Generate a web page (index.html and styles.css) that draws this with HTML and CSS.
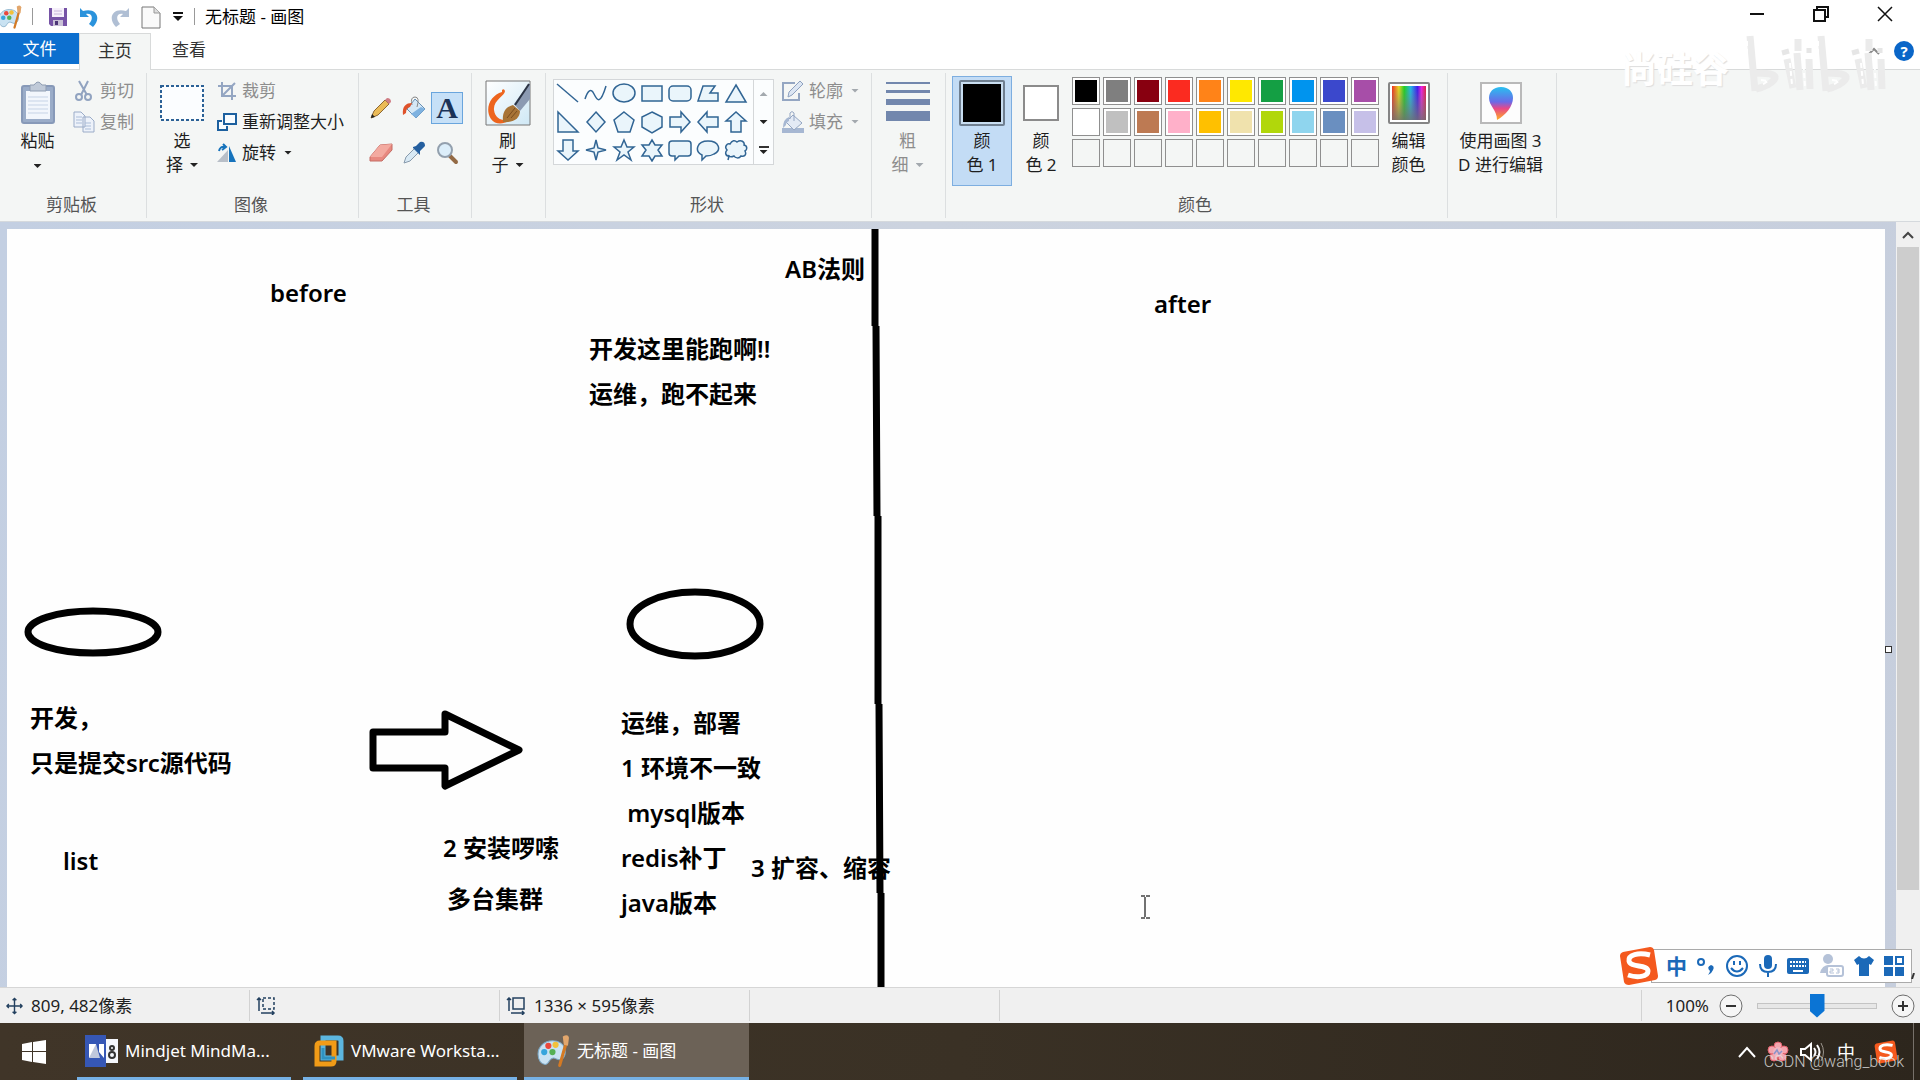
FILE: index.html
```html
<!DOCTYPE html>
<html lang="zh-CN">
<head>
<meta charset="utf-8">
<title>无标题 - 画图</title>
<link rel="stylesheet" href="styles.css">
</head>
<body>
<svg class="defs" aria-hidden="true">
  <defs>
    <linearGradient id="sky" x1="0" y1="0" x2="1" y2="1"><stop offset="0" stop-color="#fff"/><stop offset="1" stop-color="#cfe8f5"/></linearGradient>
    <linearGradient id="rainbow"><stop offset="0" stop-color="#f03020"/><stop offset=".2" stop-color="#e8d820"/><stop offset=".36" stop-color="#20d020"/><stop offset=".55" stop-color="#20b8e8"/><stop offset=".75" stop-color="#4018f0"/><stop offset=".87" stop-color="#f020e0"/><stop offset="1" stop-color="#e02040"/></linearGradient>
    <linearGradient id="fade" x1="0" y1="0" x2="0" y2="1"><stop offset="0" stop-color="#808080" stop-opacity="0"/><stop offset="1" stop-color="#707070" stop-opacity=".85"/></linearGradient>
    <linearGradient id="drop" x1="0" y1="0" x2="0" y2="1"><stop offset="0" stop-color="#28c0f0"/><stop offset=".45" stop-color="#6a6ae8"/><stop offset=".65" stop-color="#e84888"/><stop offset="1" stop-color="#ffb020"/></linearGradient>
    <symbol id="palette" viewBox="0 0 32 32">
      <path d="M15 6C7 6 1 12 1 19c0 6 3 10 7 10 4 0 3-5 7-6 3-1 5 3 9 1 3-2 4-6 3-10-1-5-6-8-12-8z" fill="#c9e2f2" stroke="#7da9c6"/>
      <circle cx="7" cy="17" r="3" fill="#37a5dc"/><circle cx="11" cy="11" r="3" fill="#e9483c"/><circle cx="18" cy="10" r="3" fill="#f2c13a"/><circle cx="15" cy="17" r="3" fill="#55b054"/>
      <path d="M28 9 22 30" stroke="#d47a24" stroke-width="3" stroke-linecap="round"/><path d="M25 2q5-3 6 1l-1 8-4-1z" fill="#e2a66c"/>
    </symbol>
    <symbol id="sogou" viewBox="0 0 40 40">
      <path d="M4 6 31 1q3 0 4 3l4 26q0 3-3 4L10 39q-4 0-5-3L1 10q0-3 3-4z" fill="#f4591e"/>
      <path d="M31 9C19 6 9 9 10 15c1 7 19 3 19 10 0 6-11 7-20 4" fill="none" stroke="#fff" stroke-width="5"/>
    </symbol>
  </defs>
</svg>

<div class="app">
  <header class="titlebar">
    <svg class="app-icon" width="24" height="24"><use href="#palette"/></svg>
    <span class="bar-divider"></span>
    <div class="quick">
      <button aria-label="保存"><svg width="20" height="20" viewBox="0 0 20 20"><path d="M1 1h18v18H3l-2-2z" fill="#7653a6"/><path d="M4 1h12v9H4z" fill="#f5effa"/><path d="M6 4h8M6 7h8" stroke="#c6b4da"/><path d="M5 13h10v6H5z" fill="#c9c1d6"/><path d="M7 14h3v4H7z" fill="#4c3576"/></svg></button>
      <button aria-label="撤消"><svg width="20" height="20" viewBox="0 0 20 20"><path d="M1 1v9h9L7 7c6-1 8 4 3 10l4 3C23 11 17 0 4 4z" fill="#2b93dc"/></svg></button>
      <button aria-label="重做"><svg width="20" height="20" viewBox="0 0 20 20"><path d="M19 1v9h-9l3-3C7 6 5 11 10 17l-4 3C-3 11 3 0 16 4z" fill="#b0bfd4"/></svg></button>
      <button aria-label="新建"><svg width="20" height="24" viewBox="0 0 20 24"><path d="M1 2h12l6 6v15H1z" fill="#fafafa" stroke="#777"/><path d="M13 2v6h6" fill="#ddd" stroke="#999"/></svg></button>
      <button aria-label="自定义快速访问工具栏"><svg width="12" height="10" viewBox="0 0 12 10"><path d="M1 1h10" stroke="#111" stroke-width="2"/><path d="M1 4h10L6 9z" fill="#111"/></svg></button>
    </div>
    <span class="bar-divider"></span>
    <h1 class="title">无标题 - 画图</h1>
    <div class="window-buttons">
      <button aria-label="最小化"><svg width="16" height="16" viewBox="0 0 16 16"><path d="M1 8h14" stroke="#111" stroke-width="2"/></svg></button>
      <button aria-label="还原"><svg width="16" height="16" viewBox="0 0 16 16"><path d="M4 4V1h11v10h-3M1 4h11v11H1z" fill="none" stroke="#111" stroke-width="2"/></svg></button>
      <button aria-label="关闭"><svg width="16" height="16" viewBox="0 0 16 16"><path d="m1 1 14 14M15 1 1 15" stroke="#111" stroke-width="1.5"/></svg></button>
    </div>
  </header>

  <nav class="tabs">
    <button class="tab tab-file">文件</button>
    <button class="tab tab-active">主页</button>
    <button class="tab">查看</button>
    <div class="tab-tools">
      <button aria-label="折叠功能区"><svg width="12" height="8" viewBox="0 0 12 8"><path d="m1 7 5-5 5 5" fill="none" stroke="#888" stroke-width="2"/></svg></button>
      <button class="help" aria-label="帮助">?</button>
    </div>
  </nav>

  <section class="ribbon">
    <div class="group g-clipboard">
      <div class="group-body">
        <button class="big paste">
          <span class="pic"><svg width="36" height="44" viewBox="0 0 36 44"><rect x="2" y="5" width="32" height="37" rx="2" fill="#9aacc8" stroke="#8799b8" stroke-width="2"/><path d="M6 10h24v28H6z" fill="#f2f6fc"/><path d="M8 16h20M8 20h20M8 24h20M8 28h20M8 32h20" stroke="#c6d3e6"/><path d="M10 4h4q4-6 8 0h4v6H10z" fill="#c0cad8" stroke="#8f9db2"/></svg></span>
          <span>粘贴</span><span class="caret"></span>
        </button>
        <div class="rows">
          <button class="row off"><svg width="22" height="22" viewBox="0 0 22 22"><path d="m6 1 8 14M15 1 8 15" stroke="#91a3c0" stroke-width="2"/><circle cx="6" cy="17" r="3" fill="none" stroke="#91a3c0" stroke-width="2"/><circle cx="15" cy="17" r="3" fill="none" stroke="#91a3c0" stroke-width="2"/></svg>剪切</button>
          <button class="row off"><svg width="22" height="22" viewBox="0 0 22 22"><path d="M1 1h7l4 4v11H1zM10 6h7l4 4v11H10z" fill="#edf2fa" stroke="#9bacc8"/><path d="M3 6h6M3 9h6M3 12h6M12 12h6M12 15h6M12 18h6" stroke="#abbdd8"/></svg>复制</button>
        </div>
      </div>
      <div class="group-label">剪贴板</div>
    </div>

    <div class="group g-image">
      <div class="group-body">
        <button class="big select">
          <span class="pic"><svg width="44" height="36" viewBox="0 0 44 36"><rect x="1" y="1" width="42" height="34" fill="#fbfdff" stroke="#2b6196" stroke-width="2" stroke-dasharray="3 2"/></svg></span>
          <span>选</span><span>择<i class="caret"></i></span>
        </button>
        <div class="rows">
          <button class="row off"><svg width="20" height="20" viewBox="0 0 20 20"><path d="M5 1v14h14M1 5h14v14M6 14 18 2" fill="none" stroke="#94a6c2" stroke-width="2"/></svg>裁剪</button>
          <button class="row"><svg width="20" height="20" viewBox="0 0 20 20"><path d="M7 2h12v10H7zM5 9H1v9h9v-4" fill="#f8fcff" stroke="#1c609f" stroke-width="2"/></svg>重新调整大小</button>
          <button class="row"><svg width="20" height="20" viewBox="0 0 20 20"><path d="M11 7v12H0z" fill="#b8bfc8"/><path d="M12 3v16h7z" fill="#1673bc"/><path d="M2 8q1-5 6-4M6 1l3 3-4 3" fill="none" stroke="#1673bc" stroke-width="2"/></svg>旋转<i class="caret"></i></button>
        </div>
      </div>
      <div class="group-label">图像</div>
    </div>

    <div class="group g-tools">
      <div class="group-body tools">
        <button aria-label="铅笔"><svg width="24" height="24" viewBox="0 0 24 24"><path d="m2 22 3-7L16 4l4 4L9 19z" fill="#ebbb57" stroke="#8c6734"/><path d="m16 4 2-2q4 0 4 4l-2 2z" fill="#cf7d84"/><path d="m2 22 1-4 3 3z" fill="#222"/></svg></button>
        <button aria-label="用颜色填充"><svg width="24" height="24" viewBox="0 0 24 24"><path d="m13 3 10 10-9 9-9-9z" fill="#d5e8f6" stroke="#658fb4"/><path d="m19 11 4 2-9 9-5-4z" fill="#7eb2e0"/><path d="M10 9Q8 1 13 1t2 10" fill="none" stroke="#888"/><path d="M10 7C4 7 0 10 1 19l3-2q0-5 4-6z" fill="#df522a"/></svg></button>
        <button class="pressed" aria-label="文本"><span class="letter">A</span></button>
        <button aria-label="橡皮擦"><svg width="24" height="24" viewBox="0 0 24 24"><path d="M1 16 11 4l12-1v6L13 20H1z" fill="#e88980" stroke="#c46d65"/><path d="m1 16 10-12 12-1-10 13z" fill="#f3aaa0"/></svg></button>
        <button aria-label="颜色选取器"><svg width="24" height="24" viewBox="0 0 24 24"><path d="m2 22 2-6 9-9 4 4-9 9z" fill="#d8e9f4" stroke="#879aac"/><path d="m11 6 3-1 4-4q5-1 5 4l-5 5v4l-7-7z" fill="#245f9f"/></svg></button>
        <button aria-label="放大镜"><svg width="24" height="24" viewBox="0 0 24 24"><path d="m15 15 6 6" stroke="#936a45" stroke-width="4" stroke-linecap="round"/><circle cx="10" cy="9" r="7" fill="#dceefa" stroke="#93a0ae" stroke-width="2"/></svg></button>
      </div>
      <div class="group-label">工具</div>
    </div>

    <div class="group g-brush">
      <div class="group-body">
        <button class="big">
          <span class="pic"><svg width="46" height="46" viewBox="0 0 46 46"><path d="M1 1h44v44H1z" fill="url(#sky)" stroke="#777"/><path d="M17 10q2-2 3 1c0 5-12 9-11 19 1 7 5 10 14 11-4 3-13 4-17-2C-1 28 6 15 17 12z" fill="#ed651e"/><path d="M29 24 43 5l2-1v15L35 31z" fill="#8b9ab2"/><path d="m44 4-14 21" stroke="#2b3444" stroke-width="2"/><path d="M18 42c-1-9 2-15 10-17l7 6c0 7-6 12-17 11z" fill="#a87436"/><path d="m22 38 8-10M26 38l6-7" stroke="#7a4d1e"/></svg></span>
          <span>刷</span><span>子<i class="caret"></i></span>
        </button>
      </div>
      <div class="group-label"></div>
    </div>

    <div class="group g-shapes">
      <div class="group-body">
        <div class="gallery">
          <div class="shapes">
            <button aria-label="直线"><svg viewBox="0 0 24 24"><path d="m1 2 21 18"/></svg></button>
            <button aria-label="曲线"><svg viewBox="0 0 24 24"><path d="M1 17C4 8 7 6 10 12s6 12 12-8"/></svg></button>
            <button aria-label="椭圆形"><svg viewBox="0 0 24 24"><ellipse cx="12" cy="11" rx="11" ry="9"/></svg></button>
            <button aria-label="矩形"><svg viewBox="0 0 24 24"><path d="M2 4h20v15H2z"/></svg></button>
            <button aria-label="圆角矩形"><svg viewBox="0 0 24 24"><rect x="1" y="4" width="22" height="15" rx="4"/></svg></button>
            <button aria-label="多边形"><svg viewBox="0 0 24 24"><path d="M2 19 7 4h12l-5 7h8v8z"/></svg></button>
            <button aria-label="三角形"><svg viewBox="0 0 24 24"><path d="m12 3 10 17H2z"/></svg></button>
            <button aria-label="直角三角形"><svg viewBox="0 0 24 24"><path d="M2 2v20h20z"/></svg></button>
            <button aria-label="菱形"><svg viewBox="0 0 24 24"><path d="m12 2 9 10-9 10-9-10z"/></svg></button>
            <button aria-label="五边形"><svg viewBox="0 0 24 24"><path d="m12 2 10 8-4 12H6L2 10z"/></svg></button>
            <button aria-label="六边形"><svg viewBox="0 0 24 24"><path d="m12 2 10 5v10l-10 6-10-6V7z"/></svg></button>
            <button aria-label="右箭头"><svg viewBox="0 0 24 24"><path d="M2 7h11V2l9 10-9 10v-5H2z"/></svg></button>
            <button aria-label="左箭头"><svg viewBox="0 0 24 24"><path d="M22 7H11V2L2 12l9 10v-5h11z"/></svg></button>
            <button aria-label="上箭头"><svg viewBox="0 0 24 24"><path d="M7 22V11H2l10-9 10 9h-5v11z"/></svg></button>
            <button aria-label="下箭头"><svg viewBox="0 0 24 24"><path d="M7 2v11H2l10 9 10-9h-5V2z"/></svg></button>
            <button aria-label="四角星形"><svg viewBox="0 0 24 24"><path d="m12 2 2 8 8 2-8 2-2 8-2-8-8-2 8-2z"/></svg></button>
            <button aria-label="五角星形"><svg viewBox="0 0 24 24"><path d="m12 2 3 7h7l-6 5 3 8-7-5-7 5 3-8-6-5h7z"/></svg></button>
            <button aria-label="六角星形"><svg viewBox="0 0 24 24"><path d="m12 2 3 5h7l-4 5 4 6h-7l-3 5-3-5H2l4-6-4-5h7z"/></svg></button>
            <button aria-label="圆角矩形标注"><svg viewBox="0 0 24 24"><path d="M4 3h16q3 0 3 3v9q0 3-3 3h-9l-4 4v-4H4q-3 0-3-3V6q0-3 3-3z"/></svg></button>
            <button aria-label="椭圆形标注"><svg viewBox="0 0 24 24"><path d="M6 22v-5C-2 13 1 3 12 3s14 9 6 13c-3 2-6 2-8 2z"/></svg></button>
            <button aria-label="云形标注"><svg viewBox="0 0 24 24"><path d="M5 18c-4 0-4-4-2-6-3-3 0-7 3-6 2-4 5-4 7-2 4-3 8 0 7 3 4 1 3 5 1 6 2 4-1 6-4 5-2 3-6 2-7 0-2 1-4 1-5 0l-1 4z"/></svg></button>
          </div>
          <div class="gallery-scroll">
            <button aria-label="上一行"><i class="caret up faint"></i></button>
            <button aria-label="下一行"><i class="caret"></i></button>
            <button class="more" aria-label="更多形状"><i class="caret"></i></button>
          </div>
        </div>
        <div class="rows">
          <button class="row off"><svg width="22" height="22" viewBox="0 0 22 22"><path d="M13 3H1v17h16v-7" fill="none" stroke="#94a6c2" stroke-width="2"/><path d="m6 17 1-5L18 1l3 3L10 15z" fill="#dce6f3" stroke="#8ea1bf"/></svg>轮廓<i class="caret faint"></i></button>
          <button class="row off"><svg width="22" height="22" viewBox="0 0 22 22"><path d="M0 17h22v5H0z" fill="#a6b7d2"/><path d="m11 4 9 8-8 7-8-8z" fill="#e3eaf5" stroke="#94a6c2"/><path d="M8 8V2q2-3 4 0v8" fill="none" stroke="#94a6c2"/><path d="M7 6q-6 2-6 11l3-3q0-3 3-4z" fill="#a6b7d2"/></svg>填充<i class="caret faint"></i></button>
        </div>
      </div>
      <div class="group-label">形状</div>
    </div>

    <div class="group g-size">
      <div class="group-body">
        <button class="big off">
          <span class="pic"><svg width="44" height="44" viewBox="0 0 44 44"><path d="M0 1h44v2H0zM0 9h44v3H0zM0 18h44v6H0zM0 30h44v10H0z" fill="#7287ad"/></svg></span>
          <span>粗</span><span>细<i class="caret faint"></i></span>
        </button>
      </div>
      <div class="group-label"></div>
    </div>

    <div class="group g-colors">
      <div class="group-body">
        <button class="big color-slot chosen"><span class="pic"><i class="swatch-large"></i></span><span>颜</span><span>色 1</span></button>
        <button class="big color-slot"><span class="pic"><i class="swatch-small"></i></span><span>颜</span><span>色 2</span></button>
        <div class="palette">
          <button aria-label="黑色" style="background-color:#000"></button><button aria-label="灰色-50%" style="background-color:#7f7f7f"></button><button aria-label="深红色" style="background-color:#880010"></button><button aria-label="红色" style="background-color:#fb2b20"></button><button aria-label="橙色" style="background-color:#ff8318"></button><button aria-label="黄色" style="background-color:#ffe800"></button><button aria-label="绿色" style="background-color:#149f44"></button><button aria-label="青绿色" style="background-color:#0094ee"></button><button aria-label="靛蓝色" style="background-color:#3b48cc"></button><button aria-label="紫色" style="background-color:#a74ea8"></button>
          <button aria-label="白色" style="background-color:#fff"></button><button aria-label="灰色-25%" style="background-color:#c0c0c0"></button><button aria-label="褐色" style="background-color:#bd7a53"></button><button aria-label="玫瑰色" style="background-color:#ffb0c9"></button><button aria-label="金色" style="background-color:#ffc000"></button><button aria-label="浅黄色" style="background-color:#f0e2ad"></button><button aria-label="酸橙色" style="background-color:#b1d70b"></button><button aria-label="淡青绿色" style="background-color:#8fd5ee"></button><button aria-label="蓝灰色" style="background-color:#6a8fc0"></button><button aria-label="淡紫色" style="background-color:#c6c0e8"></button>
          <button class="empty" aria-label="自定义 1"></button><button class="empty" aria-label="自定义 2"></button><button class="empty" aria-label="自定义 3"></button><button class="empty" aria-label="自定义 4"></button><button class="empty" aria-label="自定义 5"></button><button class="empty" aria-label="自定义 6"></button><button class="empty" aria-label="自定义 7"></button><button class="empty" aria-label="自定义 8"></button><button class="empty" aria-label="自定义 9"></button><button class="empty" aria-label="自定义 10"></button>
        </div>
        <button class="big edit-colors">
          <span class="pic"><svg width="42" height="42" viewBox="0 0 42 42"><rect x="1" y="1" width="40" height="40" rx="1" fill="#fff" stroke="#858585" stroke-width="2"/><path d="M4 4h34v34H4z" fill="url(#rainbow)"/><path d="M4 4h34v34H4z" fill="url(#fade)"/></svg></span>
          <span>编辑</span><span>颜色</span>
        </button>
      </div>
      <div class="group-label">颜色</div>
    </div>

    <div class="group g-3d">
      <div class="group-body">
        <button class="big">
          <span class="pic"><svg width="42" height="42" viewBox="0 0 42 42"><path d="M1 1h40v40H1z" fill="#fdfdfd" stroke="#b9b9b9" stroke-width="2"/><path d="M21 5c-8 0-12 5-12 11 0 8 8 12 8 22 9-5 16-14 16-22 0-6-4-11-12-11z" fill="url(#drop)"/></svg></span>
          <span>使用画图 3</span><span>D 进行编辑</span>
        </button>
      </div>
      <div class="group-label"></div>
    </div>
  </section>

  <main class="workspace">
    <div class="canvas">
      <svg class="ink" aria-hidden="true">
        <path d="M868 0v97M869 97l1 190M871 287v188M872 475l1 189M874 664v900"/>
        <ellipse cx="86" cy="403" rx="65" ry="21"/>
        <ellipse cx="688" cy="395" rx="65" ry="32"/>
        <path d="M366 503h72v-18l74 36-74 36v-18h-72z"/>
      </svg>
      <p class="note n-before">before</p>
      <p class="note n-rule">AB法则</p>
      <p class="note n-after">after</p>
      <p class="note n-works">开发这里能跑啊!!<br>运维，跑不起来</p>
      <p class="note n-dev">开发，<br>只是提交src源代码</p>
      <p class="note n-list">list</p>
      <p class="note n-install">2 安装啰嗦</p>
      <p class="note n-cluster">多台集群</p>
      <p class="note n-ops">运维，部署<br>1 环境不一致<br> mysql版本<br>redis补丁<br>java版本</p>
      <p class="note n-scale">3 扩容、缩容</p>
      <svg class="text-cursor" width="11" height="24" viewBox="0 0 11 24" aria-hidden="true"><path d="M1 1h4M6 1h4M1 23h4M6 23h4M5 2v20" fill="none" stroke="#444" stroke-width="1.5"/></svg>
    </div>
    <span class="resize-handle"></span>
    <div class="scrollbar">
      <button aria-label="向上滚动"><svg width="12" height="8" viewBox="0 0 12 8"><path d="m1 7 5-5 5 5" fill="none" stroke="#444" stroke-width="2"/></svg></button>
      <div class="scroll-thumb"></div>
    </div>
    <div class="ime">
      <svg class="ime-logo" width="40" height="40"><use href="#sogou"/></svg>
      <div class="ime-bar">
        <button class="ime-text">中</button>
        <button aria-label="中文标点"><svg width="18" height="24" viewBox="0 0 18 24"><circle cx="4" cy="8" r="3" fill="none" stroke="#1b69b8" stroke-width="2"/><path d="M14 11q4 1 2 5-1 3-5 5 2-3 2-4-4-4 1-6z" fill="#1b69b8"/></svg></button>
        <button aria-label="表情"><svg width="24" height="24" viewBox="0 0 24 24"><circle cx="12" cy="12" r="10" fill="none" stroke="#1b69b8" stroke-width="2"/><path d="M9 7v4M15 7v4M6 14q6 7 12 0" fill="none" stroke="#1b69b8" stroke-width="2"/></svg></button>
        <button aria-label="语音"><svg width="18" height="24" viewBox="0 0 18 24"><rect x="5" y="1" width="8" height="14" rx="4" fill="#1b69b8"/><path d="M1 10q0 8 8 8t8-8M9 18v5" fill="none" stroke="#1b69b8" stroke-width="2"/></svg></button>
        <button aria-label="软键盘"><svg width="24" height="18" viewBox="0 0 24 18"><rect x="1" y="1" width="22" height="16" rx="2" fill="#1b69b8"/><path d="M4 5h16M4 9h16" stroke="#fff" stroke-width="2" stroke-dasharray="2 1"/><path d="M7 14h10" stroke="#fff" stroke-width="2"/></svg></button>
        <button aria-label="用户"><svg width="24" height="24" viewBox="0 0 24 24"><circle cx="8" cy="5" r="5" fill="#b5c2d8"/><path d="M0 19q2-9 11-8v8z" fill="#b5c2d8"/><rect x="7" y="12" width="16" height="10" rx="2" fill="#fff" stroke="#b5c2d8" stroke-width="2"/><path d="M10 15h3v2h-3v2h4M16 15h3v4h-3M17 17h2" fill="none" stroke="#b5c2d8"/></svg></button>
        <button aria-label="皮肤"><svg width="20" height="20" viewBox="0 0 20 20"><path d="M5 0q5 5 10 0l5 4-3 5-2-1v12H5V8L3 9 0 4z" fill="#1b69b8"/></svg></button>
        <button aria-label="工具箱"><svg width="20" height="20" viewBox="0 0 20 20"><path d="M0 0h9v9H0zM0 11h9v9H0zM11 11h9v9h-9z" fill="#1b69b8"/><path d="M12 1h7v7h-7z" fill="none" stroke="#1b69b8" stroke-width="2"/></svg></button>
      </div>
      <svg class="ime-grip" width="4" height="6" viewBox="0 0 4 6" aria-hidden="true"><path d="M3 0 1 6" stroke="#333" stroke-width="2"/></svg>
    </div>
  </main>

  <footer class="status">
    <div class="cell"><svg width="17" height="18" viewBox="0 0 18 18"><path d="M9 1v16M1 9h16M7 3l2-2 2 2M7 15l2 2 2-2M3 7 1 9l2 2M15 7l2 2-2 2" fill="none" stroke="#23405f" stroke-width="1.5"/></svg>809, 482像素</div>
    <div class="cell"><svg width="20" height="18" viewBox="0 0 20 18"><path d="M3 1v13M1 3l2-2 2 2M5 16h13M16 14l2 2-2 2" fill="none" stroke="#23405f" stroke-width="1.5"/><path d="M7 1h11v11H7z" fill="none" stroke="#23405f" stroke-width="1.5" stroke-dasharray="3 2"/></svg></div>
    <div class="cell"><svg width="20" height="18" viewBox="0 0 20 18"><path d="M3 1v13M1 3l2-2 2 2M5 16h13M16 14l2 2-2 2" fill="none" stroke="#23405f" stroke-width="1.5"/><path d="M7 1h11v11H7z" fill="none" stroke="#23405f" stroke-width="1.5"/></svg>1336 × 595像素</div>
    <div class="cell"></div>
    <div class="zoom">
      <label for="zoom">100%</label>
      <button aria-label="缩小"><svg width="24" height="24" viewBox="0 0 24 24"><circle cx="12" cy="12" r="11" fill="#f6f6f6" stroke="#6d6d6d"/><path d="M7 12h10" stroke="#333" stroke-width="2"/></svg></button>
      <input id="zoom" type="range" min="0" max="100" value="50">
      <button aria-label="放大"><svg width="24" height="24" viewBox="0 0 24 24"><circle cx="12" cy="12" r="11" fill="#f6f6f6" stroke="#6d6d6d"/><path d="M7 12h10M12 7v10" stroke="#333" stroke-width="2"/></svg></button>
    </div>
  </footer>

  <div class="taskbar">
    <button class="start" aria-label="开始"><svg width="24" height="24" viewBox="0 0 24 24"><path d="m0 4 10-2v9H0zM11 2l13-2v11H11zM0 12h10v10L0 20zM11 12h13v12l-13-2z" fill="#fff"/></svg></button>
    <button class="task"><svg width="33" height="32" viewBox="0 0 33 32"><path d="M0 0h21v32H0z" fill="#3657b5"/><path d="M21 4h12v24H21z" fill="#f5f7fc"/><path d="M4 9v14l7-8V9zM19 9v14l-5-6V9z" fill="#fff"/><path d="m4 23 7-14 4 14z" fill="#c0c8dc"/><circle cx="27" cy="13" r="2" fill="none" stroke="#333" stroke-width="2"/><circle cx="27" cy="20" r="3" fill="none" stroke="#333" stroke-width="2"/></svg><span>Mindjet MindMa...</span></button>
    <button class="task"><svg width="30" height="32" viewBox="0 0 30 32"><path d="M9 3h15q3 0 3 3v17H9z" fill="none" stroke="#5cb6df" stroke-width="5"/><path d="M3 11q0-3 3-3h14v18q0 3-3 3H3z" fill="none" stroke="#f19b17" stroke-width="5"/><path d="M9 13v10h12" fill="none" stroke="#2f92c0" stroke-width="3"/></svg><span>VMware Worksta...</span></button>
    <button class="task current"><svg width="33" height="34"><use href="#palette"/></svg><span>无标题 - 画图</span></button>
    <div class="tray">
      <button aria-label="显示隐藏的图标"><svg width="18" height="12" viewBox="0 0 18 12"><path d="m1 11 8-9 8 9" fill="none" stroke="#fff" stroke-width="2"/></svg></button>
      <button aria-label="通知"><svg width="22" height="22" viewBox="0 0 22 22"><g fill="#f2a5ae" stroke="#e3616d"><circle cx="11" cy="5" r="4"/><circle cx="17" cy="9" r="4"/><circle cx="15" cy="16" r="4"/><circle cx="7" cy="16" r="4"/><circle cx="5" cy="9" r="4"/></g><circle cx="11" cy="11" r="5" fill="#f0b4c0"/><path d="m7 13 3-4 2 4 3-3" fill="none" stroke="#8b93c9" stroke-width="1.5"/></svg></button>
      <button aria-label="音量"><svg width="24" height="20" viewBox="0 0 24 20"><path d="M1 7h4l6-5v16l-6-5H1z" fill="none" stroke="#fff" stroke-width="2"/><path d="M14 6q3 4 0 8M17 3q5 7 0 14" fill="none" stroke="#fff" stroke-width="2"/><path d="M21 1q5 9 0 18" fill="none" stroke="#9b958d"/></svg></button>
      <button class="tray-text">中</button>
      <button aria-label="搜狗输入法"><svg width="24" height="24"><use href="#sogou"/></svg></button>
      <span class="show-desktop"></span>
    </div>
    <span class="credit">CSDN @wang_book</span>
  </div>

  <div class="stamp">
    <span>尚硅谷</span>
    <svg width="142" height="64" viewBox="0 0 142 64" role="img" aria-label="bilibili"><g fill="none" stroke="#ebebeb" stroke-width="7"><path d="M6 3l5 55M12 40q24 0 18 7-5 6-18 9"/><path d="m43 26 6 29M54 6v12M53 20l3 37M65 26l1 30"/><path d="M77 3l5 55M83 40q24 0 18 7-5 6-18 9"/><path d="m114 26 6 29M125 6v12M124 20l3 37M137 26l1 30"/></g><path d="M38 20l7-2M65 20v-5M108 20l7-2M136 20v-5" stroke="#e6e6e6" stroke-width="5"/><path d="m17 47 7 1-6 4M88 47l7 1-6 4M3 8v16M46 30l2 22M59 24l2 30M74 8v16M117 30l2 22M130 24l2 30" fill="none" stroke="#fff" stroke-width="2" stroke-dasharray="5 3"/></svg>
  </div>
</div>
</body>
</html>
```
FILE: styles.css
```css
* { box-sizing: border-box; }

body {
  margin: 0;
  font-family: "Noto Sans", "Noto Sans CJK SC", sans-serif;
  font-size: 17px;
  line-height: 24px;
  color: #1e1e1e;
}

button {
  margin: 0;
  padding: 0;
  border: 0;
  background: none;
  font: inherit;
  color: inherit;
}

svg { display: block; flex: none; }

.defs { position: absolute; width: 0; height: 0; }

.app {
  position: relative;
  display: flex;
  flex-direction: column;
  height: 100vh;
  overflow: hidden;
  background: #fff;
}

/* Title bar */
.titlebar {
  display: flex;
  flex: none;
  align-items: center;
  height: 33px;
  gap: 10px;
}
.app-icon { margin-left: -2px; }
.bar-divider { width: 1px; height: 17px; background: #999; }
.quick { display: flex; align-items: center; gap: 11px; margin-left: 5px; }
.quick button { display: flex; }
.title { margin: 0; font-size: 17px; font-weight: 400; color: #000; }
.window-buttons { display: flex; margin-left: auto; margin-top: -5px; }
.window-buttons button { display: flex; align-items: center; justify-content: center; width: 64px; height: 28px; }
.window-buttons button:last-child { margin-right: 3px; }

/* Tabs */
.tabs {
  display: flex;
  flex: none;
  height: 37px;
  border-bottom: 1px solid #d8dada;
}
.tab { width: 76px; height: 34px; color: #333; }
.tab-file { width: 79px; height: 31px; background: #0c6fcf; color: #fff; }
.tab-active {
  width: 72px;
  height: 37px;
  padding-bottom: 3px;
  border: 1px solid #d8dada;
  border-bottom: 0;
  background: #f4f6f5;
}
.tab-tools { display: flex; align-items: center; gap: 14px; margin-left: auto; padding-right: 6px; height: 35px; }
.help { width: 20px; height: 20px; border-radius: 50%; background: #0a66c8; color: #fff; font-size: 15px; font-weight: 700; line-height: 20px; }

/* Ribbon */
.ribbon {
  display: flex;
  flex: none;
  height: 152px;
  padding-top: 3px;
  border-bottom: 1px solid #d5d9dd;
  background: #f4f6f5;
}
.group {
  display: flex;
  flex: none;
  flex-direction: column;
  height: 145px;
  border-right: 1px solid #dcdfe0;
}
.group-body { display: flex; flex: 1; }
.group-label { height: 25px; padding-right: 3px; text-align: center; color: #555; }
.g-clipboard { width: 147px; }
.g-image { width: 212px; }
.g-tools { width: 113px; }
.g-brush { width: 74px; }
.g-shapes { width: 326px; }
.g-size { width: 74px; }
.g-colors { width: 502px; }
.g-3d { width: 109px; }

.big { display: flex; flex-direction: column; align-items: center; width: 71px; height: 112px; padding-top: 4px; }
.big > span:not(.pic) { display: flex; align-items: center; gap: 7px; min-height: 24px; white-space: nowrap; }
.pic { display: flex; align-items: center; height: 52px; }
.off { color: #8d8d8d; }

.caret {
  display: inline-block;
  width: 8px;
  height: 4px;
  background: #222;
  clip-path: polygon(0 0, 100% 0, 50% 100%);
}
.big > .caret:not(.pic) { min-height: 4px; margin-top: 11px; }
.caret.up { clip-path: polygon(50% 0, 100% 100%, 0 100%); }
.caret.faint { background: #a3a9ae; }

.rows { display: flex; flex-direction: column; padding-top: 2px; }
.row { display: flex; align-items: center; height: 31px; gap: 5px; white-space: nowrap; }
.row .caret { margin-left: 3px; }
.paste { margin-left: 2px; }
.g-image .big { width: 68px; }
.select { margin: 0 1px; }

.tools { display: grid; grid-template-columns: repeat(3, 33px); grid-auto-rows: 45px; padding: 12px 0 0 6px; }
.tools button { display: flex; align-items: center; justify-content: center; width: 32px; height: 32px; align-self: center; }
.tools .pressed { border: 1px solid #69a5dd; background: #c6e0f7; }
.letter { font-family: "Liberation Serif", serif; font-size: 30px; font-weight: 700; line-height: 30px; color: #1b3358; }

.gallery { display: flex; width: 221px; height: 86px; margin: 6px 8px 0 7px; border: 1px solid #d4d7d9; background: #fbfdfe; }
.shapes { display: grid; grid-template-columns: repeat(7, 28px); grid-auto-rows: 28px; width: 199px; padding-right: 2px; }
.shapes button { display: flex; align-items: center; justify-content: center; }
.shapes svg { width: 24px; height: 24px; fill: #eaf5fb; stroke: #316594; stroke-width: 1.5; }
.shapes button:nth-child(-n + 2) svg { fill: none; }
.gallery-scroll { display: grid; grid-auto-rows: 28px; flex: 1; border-left: 1px solid #d4d7d9; }
.gallery-scroll button { display: flex; flex-direction: column; gap: 2px; align-items: center; justify-content: center; }
.more::before { content: ""; width: 10px; height: 2px; background: #333; }

.color-slot { width: 60px; }
.g-colors .chosen { margin: 3px 0 0 6px; padding-top: 0; height: 110px; border: 1px solid #7daee0; background: #c3dcf5; }
.color-slot:nth-child(2) { width: 58px; }
.swatch-large { width: 46px; height: 46px; border: 2px solid #6f7f90; border-radius: 2px; background: #000; box-shadow: inset 0 0 0 2px #c8ddf0; }
.swatch-small { width: 36px; height: 36px; border: 2px solid #8b8b8b; background: #fff; }
.palette { display: grid; grid-template-columns: repeat(10, 28px); grid-auto-rows: 28px; gap: 3px; padding: 4px 0 0 2px; }
.palette button { border: 1px solid #8f8f8f; box-shadow: inset 0 0 0 2px #fff; }
.palette .empty { box-shadow: none; }
.g-3d .big { width: 105px; }
.edit-colors { margin-left: -6px; }

/* Drawing area */
.workspace {
  position: relative;
  display: flex;
  flex: 1;
  min-height: 0;
  padding: 7px 0 0 7px;
  background: linear-gradient(100deg, #c3cfe2, #ccd3df 45%, #c6cedd);
}
.canvas { position: relative; flex: 1; margin-right: 11px; overflow: hidden; background: #fefefe; }
.ink { position: absolute; inset: 0; width: 100%; height: 100%; fill: none; stroke: #000; stroke-width: 7; stroke-linejoin: round; }
.note { position: absolute; margin: 0; font-size: 24px; font-weight: 600; line-height: 45px; color: #000; white-space: pre; }
.n-before { left: 263px; top: 41px; }
.n-rule { left: 778px; top: 17px; }
.n-after { left: 1147px; top: 52px; }
.n-works { left: 582px; top: 97px; }
.n-dev { left: 23px; top: 466px; }
.n-list { left: 56px; top: 609px; }
.n-install { left: 436px; top: 596px; }
.n-cluster { left: 440px; top: 647px; }
.n-ops { left: 614px; top: 471px; }
.n-scale { left: 744px; top: 616px; }
.text-cursor { position: absolute; left: 1133px; top: 666px; }
.resize-handle { position: absolute; right: 28px; top: 424px; width: 7px; height: 7px; border: 1px solid #333; background: #fff; }

.scrollbar { display: flex; flex-direction: column; width: 24px; margin-top: -7px; padding: 0 1px; background: #f0f0f0; }
.scrollbar button { display: flex; flex: none; align-items: center; justify-content: center; height: 25px; }
.scroll-thumb { height: 84%; background: #cdcdcd; }

/* Input method bar floats over the drawing */
.ime { position: absolute; right: 8px; bottom: 1px; display: flex; align-items: center; width: 293px; height: 40px; }
.ime-logo { position: relative; z-index: 1; }
.ime-bar { display: flex; flex: 1; align-items: center; justify-content: space-between; height: 34px; margin-left: -8px; padding: 0 7px 0 14px; border: 1px solid #aaa; background: #fff; }
.ime-text { font-size: 21px; font-weight: 700; color: #1b69b8; }
.ime-grip { position: absolute; right: -3px; bottom: 7px; }

/* Status bar */
.status { display: flex; flex: none; height: 36px; padding: 2px 0; border-top: 1px solid #d6d6d6; background: #f0f0f0; }
.cell { display: flex; align-items: center; gap: 8px; width: 250px; padding-left: 6px; border-right: 1px solid #d2d2d2; white-space: nowrap; }
.zoom { display: flex; align-items: center; margin-left: auto; padding: 0 5px 0 24px; border-left: 1px solid #d2d2d2; }
.zoom label { margin-right: 10px; }
.zoom input { width: 120px; height: 26px; margin: 0 14px; appearance: none; background: none; }
.zoom input::-webkit-slider-runnable-track { height: 6px; border: 1px solid #c4c4c4; background: #e7e7e7; }
.zoom input::-webkit-slider-thumb { appearance: none; width: 15px; height: 24px; margin-top: -10px; background: #0b74d4; clip-path: polygon(0 0, 100% 0, 100% 72%, 50% 100%, 0 72%); }

/* Taskbar */
.taskbar { position: relative; display: flex; flex: none; height: 57px; background: linear-gradient(90deg, #403528, #3a3125 50%, #2d261d); color: #fff; }
.start { display: flex; align-items: center; justify-content: center; width: 68px; }
.task { display: flex; align-items: center; gap: 7px; width: 214px; margin-left: 9px; padding: 2px 0 0 8px; border-bottom: 3px solid #76b1e5; white-space: nowrap; }
.task + .task { margin-left: 12px; padding-left: 11px; }
.task + .current { width: 225px; margin-left: 7px; padding-left: 13px; background: #6c6257; }
.tray { display: flex; align-items: center; gap: 11px; margin-left: auto; }
.tray-text { margin: 0 8px 0 2px; font-size: 18px; }
.show-desktop { width: 7px; height: 100%; margin-left: 4px; border-left: 1px solid #77716a; }
.credit { position: absolute; right: 16px; bottom: 6px; font-family: Roboto, "Noto Sans", sans-serif; font-size: 16px; font-weight: 300; line-height: 24px; color: rgba(225, 225, 225, 0.85); }

/* Channel mark over the window corner */
.stamp { position: absolute; top: 33px; right: 34px; display: flex; align-items: center; gap: 15px; font-size: 36px; font-weight: 700; line-height: 40px; color: #fff; text-shadow: 1px 1px 1px #ddd; pointer-events: none; }
.stamp span { margin-top: 10px; }
```
